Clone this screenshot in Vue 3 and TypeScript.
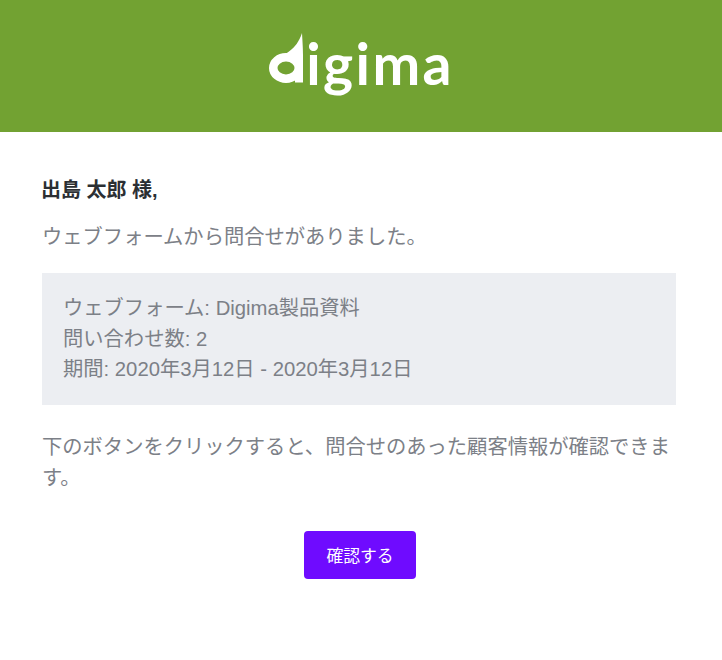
<template>
  <div class="mail">
    <!-- Header -->
    <header class="mail-header">
      <div class="logo" aria-label="digima">
        <svg class="logo-mark" viewBox="0 0 36 51" aria-hidden="true">
          <ellipse cx="17" cy="35" rx="12.750" ry="10.750" fill="none" stroke="#fff" stroke-width="8.500" />
          <path d="M33 0C33.500 9 34 14 34 22L34 49.500L26 49.500L26 33C25 28 21 24.500 15 24C16 21 18 20 20 18.500C26 14 30 9 33 0Z" fill="#fff" />
        </svg>
        <span class="logo-text">igima</span>
      </div>
    </header>

    <main class="mail-body">
      <p class="greeting">{{ customerName }} 様,</p>
      <p class="lead">ウェブフォームから問合せがありました。</p>

      <div class="summary">
        <div v-for="line in summaryLines" :key="line">{{ line }}</div>
      </div>

      <p class="note">下のボタンをクリックすると、問合せのあった顧客情報が確認できます。</p>

      <div class="actions">
        <button class="confirm-btn" type="button">確認する</button>
      </div>
    </main>
  </div>
</template>

<script setup lang="ts">
const customerName = '出島 太郎'

const summaryLines: string[] = [
  'ウェブフォーム: Digima製品資料',
  '問い合わせ数: 2',
  '期間: 2020年3月12日 - 2020年3月12日'
]
</script>

<style>
html,
body {
  margin: 0;
  background: #fff;
}
</style>

<style scoped>
.mail {
  width: 722px;
  height: 660px;
  overflow: hidden;
  font-family: "Liberation Sans", "Noto Sans CJK JP", sans-serif;
  color: #7c8087;
}

.mail-header {
  height: 132px;
  background: #72a232;
  display: flex;
  justify-content: center;
  padding-top: 33px;
  box-sizing: border-box;
}

.logo {
  display: flex;
  align-items: flex-start;
  height: 62px;
  padding-left: 1px;
}

.logo-mark {
  width: 36px;
  height: 51px;
  flex: none;
}

.logo-text {
  font-family: Lato, sans-serif;
  font-weight: 700;
  font-size: 57px;
  line-height: 60px;
  color: #fff;
  letter-spacing: 2.4px;
  margin-left: 1px;
}

.mail-body {
  padding: 46px 44px 0 41px;
}

.greeting {
  margin: 0;
  font-size: 20px;
  font-weight: 700;
  line-height: 24px;
  color: #2b2f33;
}

.lead {
  margin: 20px 0 0 1px;
  font-size: 20.3px;
  line-height: 30px;
}

.summary {
  margin: 21px 0 0 1px;
  width: 634px;
  height: 132px;
  box-sizing: border-box;
  padding: 20px 21px;
  background: #eceef2;
  font-size: 20.3px;
  line-height: 30.5px;
}

.note {
  margin: 27px 0 0 1px;
  font-size: 20.3px;
  line-height: 30.5px;
}

.actions {
  display: flex;
  justify-content: center;
  margin-top: 38px;
  width: 638px;
}

.confirm-btn {
  width: 112px;
  height: 48px;
  border: none;
  border-radius: 4px;
  background: #6f0bff;
  color: #fff;
  font-family: inherit;
  font-size: 16.8px;
  cursor: pointer;
}
</style>
